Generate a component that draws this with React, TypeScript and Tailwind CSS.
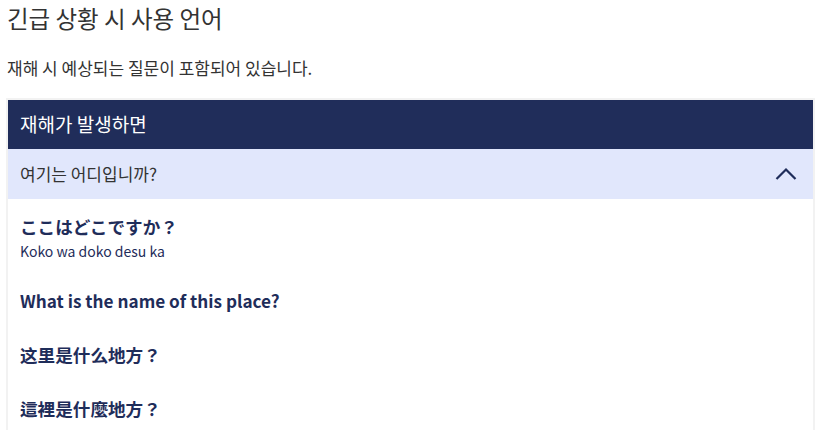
import React from "react";

const kr = { fontFamily: '"Noto Sans CJK KR", "Noto Sans", sans-serif' };

export default function App() {
  return (
    <div className="bg-white w-[821px] h-[430px] overflow-hidden text-[#333]" style={kr}>
      <h1 className="text-[23.5px] leading-[36px] font-normal pl-[7px] text-[#333]">긴급 상황 시 사용 언어</h1>
      <p className="text-[17px] leading-[24px] mt-[20px] pl-[7px] text-[#333]">재해 시 예상되는 질문이 포함되어 있습니다.</p>
      <div className="mt-[18px] mx-[6px] border-2 border-[#f2f2f2]">
        <div className="bg-[#202d5a] h-[49px] flex items-center px-[12px]">
          <span className="text-white text-[19px]">재해가 발생하면</span>
        </div>
        <div className="bg-[#e1e7fc] h-[50px] flex items-center justify-between pl-[12px] pr-[16px]">
          <span className="text-[17px] text-[#333]">여기는 어디입니까?</span>
          <svg width="22" height="14" viewBox="0 0 22 14" fill="none">
            <path d="M1.5 12 L11 2.5 L20.5 12" stroke="#1f2d5a" strokeWidth="2.2" />
          </svg>
        </div>
        <div className="bg-white px-[12px] pt-[14px] pb-[40px] text-[#1f2d5a]">
          <div className="text-[17.6px] font-bold leading-[28px]">ここはどこですか？</div>
          <div className="text-[14px] leading-[20px] text-[#1f2d5a]">Koko wa doko desu ka</div>
          <div className="text-[17.2px] font-bold leading-[28px] mt-[26px]">What is the name of this place?</div>
          <div className="text-[17.6px] font-bold leading-[28px] mt-[26px]">这里是什么地方？</div>
          <div className="text-[17.6px] font-bold leading-[28px] mt-[26px]">這裡是什麼地方？</div>
        </div>
      </div>
    </div>
  );
}
